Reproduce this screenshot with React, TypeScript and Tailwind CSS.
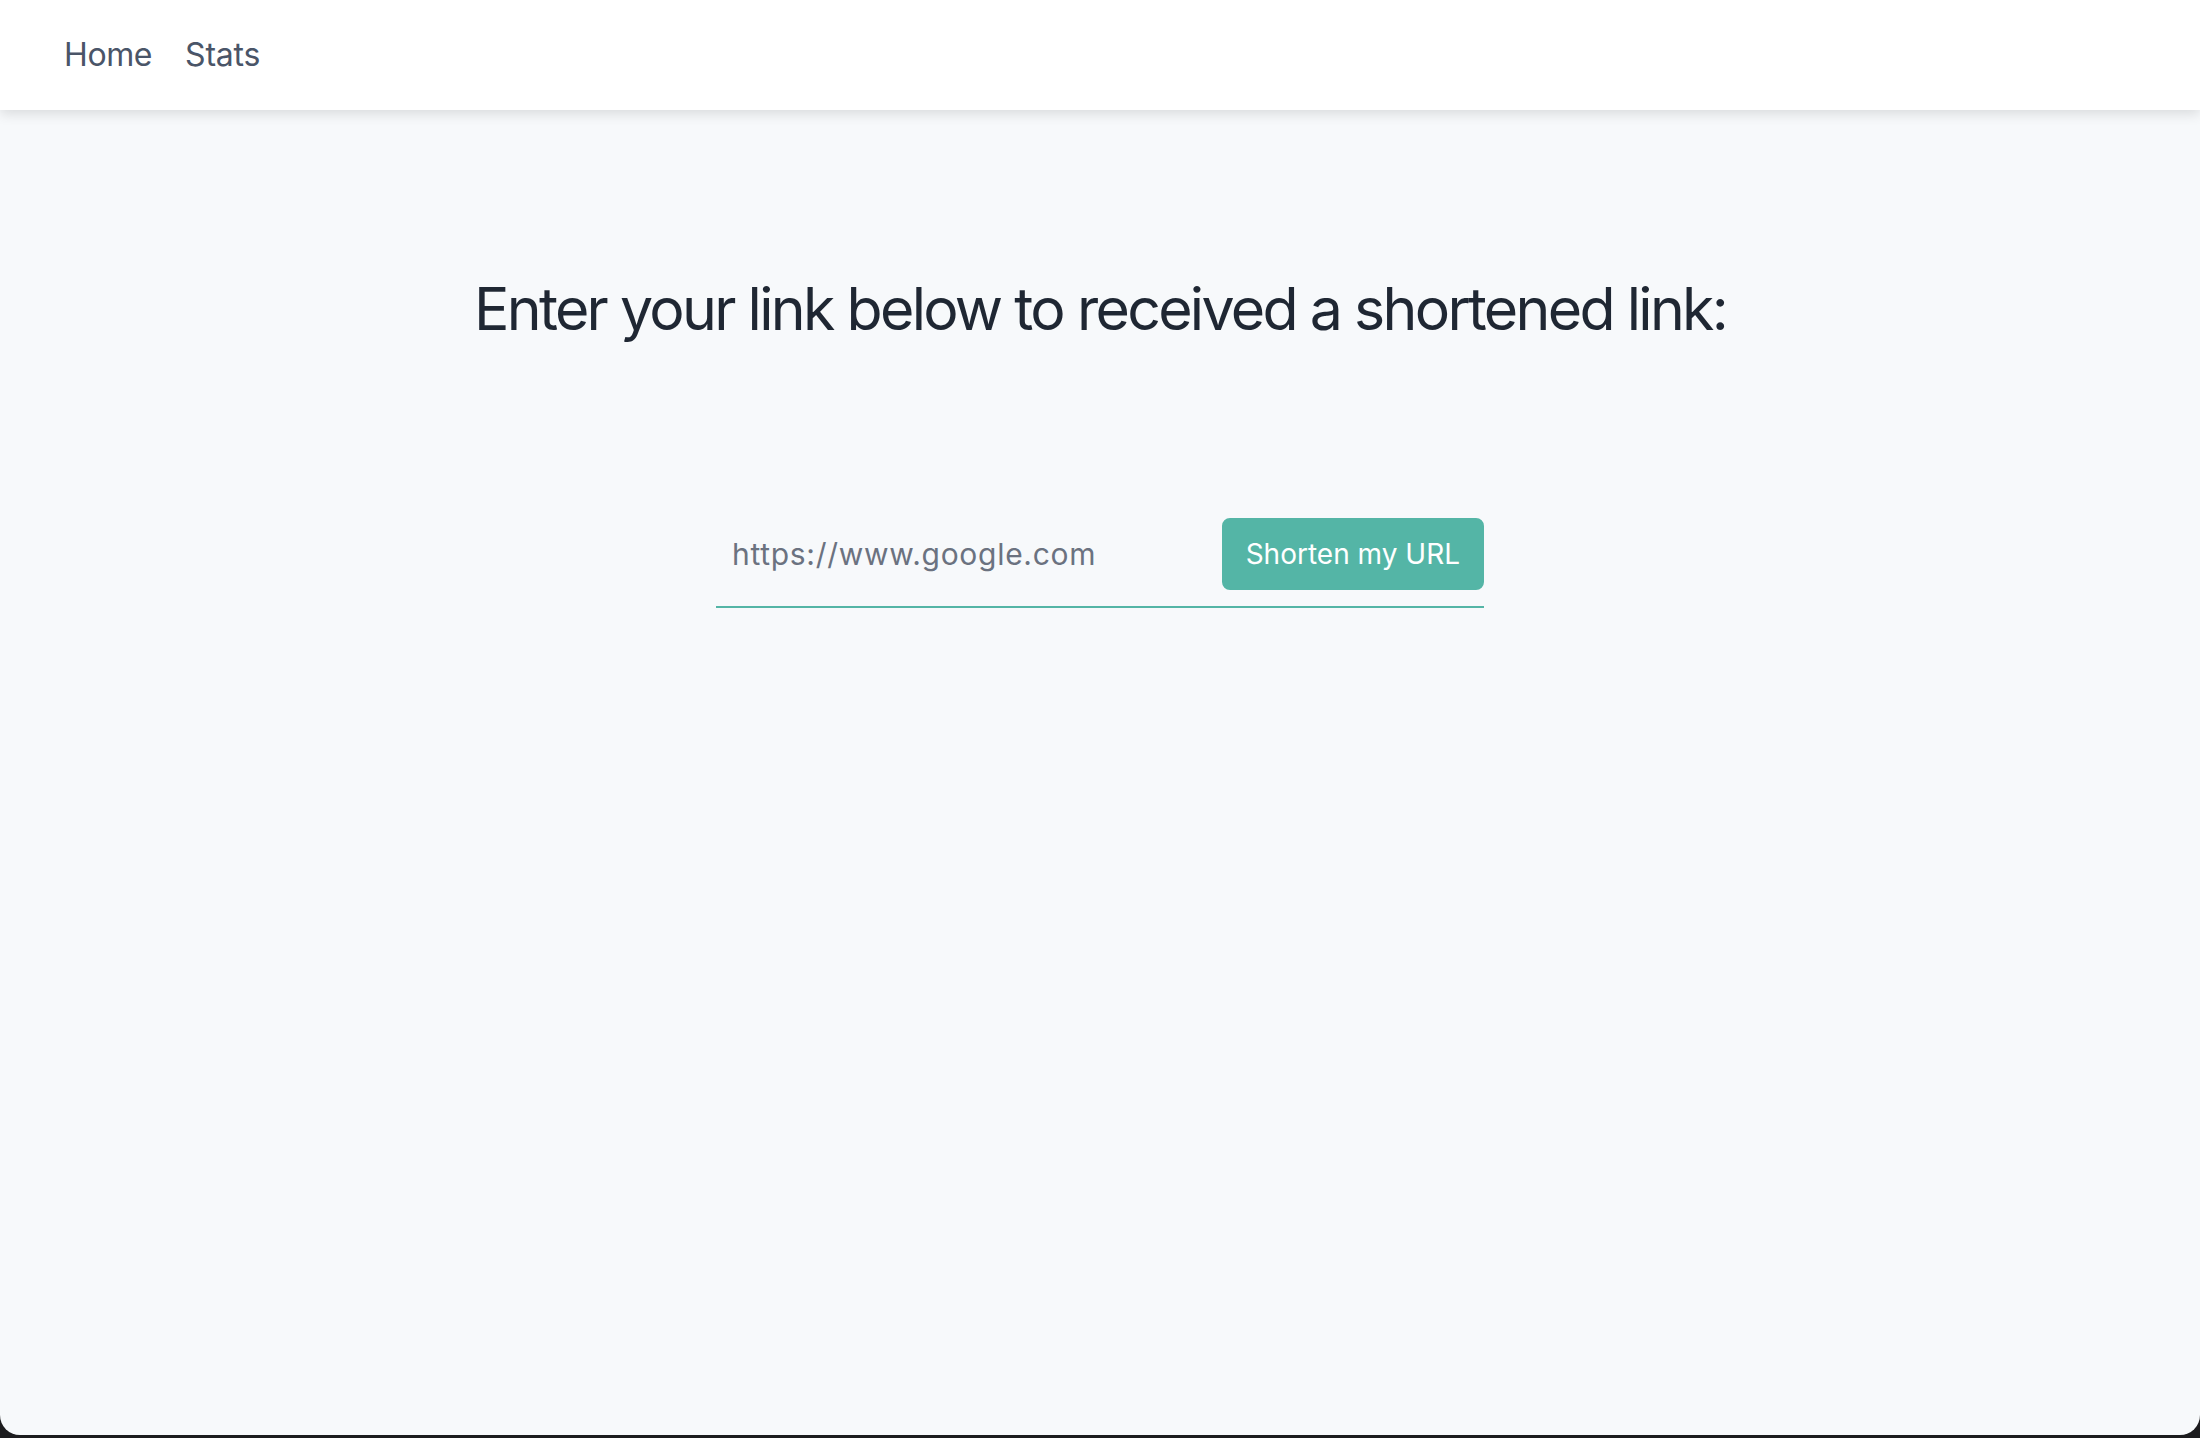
import React, { useState } from 'react';

export default function App() {
  const [url, setUrl] = useState('');

  return (
    <div className="h-[1438px] w-full bg-[#1c1c1e] font-['Inter','Liberation_Sans',sans-serif]">
      <div className="h-[1435px] w-full overflow-hidden rounded-b-[20px] bg-[#f7f9fb]">
        {/* Nav */}
        <nav className="relative z-10 flex h-[110px] items-center bg-white px-[64px] shadow-[0_4px_12px_rgba(0,0,0,0.12)]">
          <a href="#" className="mr-[33px] text-[32px] leading-[48px] tracking-[-0.4px] text-[#4a5568]">
            Home
          </a>
          <a href="#" className="text-[32px] leading-[48px] tracking-[-0.2px] text-[#4a5568]">
            Stats
          </a>
        </nav>

        {/* Main */}
        <main className="flex flex-col items-center pt-[163px]">
          <h1 className="text-[59px] leading-[72px] tracking-[-2.7px] text-[#1f2733]">
            Enter your link below to received a shortened link:
          </h1>

          <form
            className="mt-[157px] flex w-[768px] items-center border-b-2 border-[#54b5a6] py-4"
            onSubmit={(e) => e.preventDefault()}
          >
            <input
              value={url}
              onChange={(e) => setUrl(e.target.value)}
              placeholder="https://www.google.com"
              className="mr-6 w-full appearance-none border-none bg-transparent px-4 py-2 text-[30px] leading-[44px] tracking-[0.7px] text-[#4a5568] placeholder:text-[#6b7280] focus:outline-none"
            />
            <button
              type="submit"
              className="shrink-0 rounded-[8px] border-[8px] border-[#54b5a6] bg-[#54b5a6] px-4 py-2 text-[28px] leading-[40px] text-white"
            >
              Shorten my URL
            </button>
          </form>
        </main>
      </div>
    </div>
  );
}
